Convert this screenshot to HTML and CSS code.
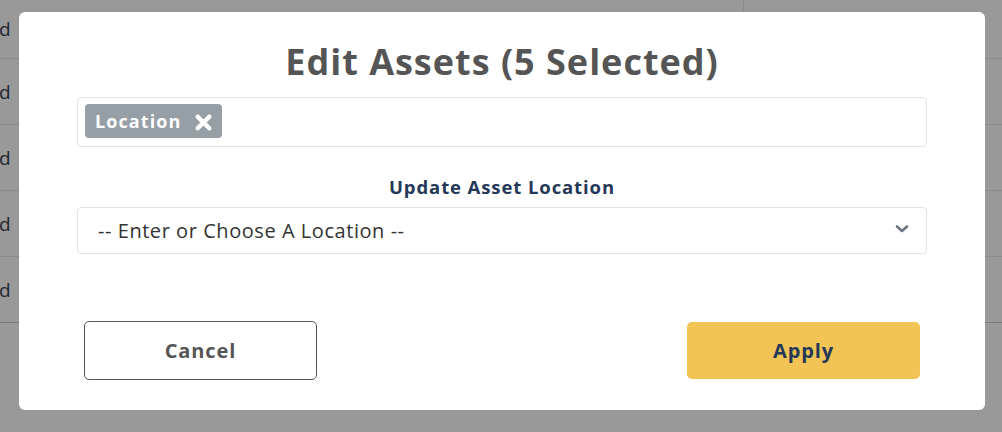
FILE: index.html
```html
<!DOCTYPE html>
<html>
<head>
<meta charset="utf-8">
<link rel="stylesheet" href="styles.css">
</head>
<body>
<div class="table">
  <div class="row first"><span class="cell">d</span><span class="col-line"></span></div>
  <div class="row"><span class="cell">d</span></div>
  <div class="row"><span class="cell">d</span></div>
  <div class="row"><span class="cell">d</span></div>
  <div class="row last"><span class="cell">d</span></div>
</div>
<div class="overlay">
  <div class="modal">
    <h1 class="title">Edit Assets (5 Selected)</h1>
    <div class="tag-box">
      <span class="tag">Location
        <svg class="tag-x" width="19" height="19" viewBox="0 0 18 18"><path d="M3.5 3.5 L14.5 14.5 M14.5 3.5 L3.5 14.5" stroke="#fff" stroke-width="4.2" stroke-linecap="round"/></svg>
      </span>
    </div>
    <div class="label">Update Asset Location</div>
    <div class="select">
      <span>-- Enter or Choose A Location --</span>
      <svg class="chev" width="14" height="10" viewBox="0 0 14 10"><path d="M2 2.5 L7 7 L12 2.5" fill="none" stroke="#6b7480" stroke-width="2.6" stroke-linecap="round" stroke-linejoin="round"/></svg>
    </div>
    <div class="actions">
      <button class="btn cancel">Cancel</button>
      <button class="btn apply">Apply</button>
    </div>
  </div>
</div>
</body>
</html>
```
FILE: styles.css
```css
* { box-sizing: border-box; }
html, body { margin: 0; padding: 0; }
body {
  width: 1002px;
  height: 432px;
  overflow: hidden;
  background: #ffffff;
  font-family: "Open Sans", "Liberation Sans", sans-serif;
  position: relative;
}
.table { display: flex; flex-direction: column; }
.row {
  height: 66px;
  border-bottom: 1px solid #e6e8eb;
  display: flex;
  align-items: center;
  position: relative;
}
.row.first { height: 59px; }
.row.last { border-bottom-color: #c8c8c8; }
.cell {
  font-size: 19px;
  color: #3a4250;
  margin-left: -1px;
}
.col-line {
  position: absolute;
  left: 743px;
  top: 0;
  bottom: 0;
  border-left: 1px solid #e6e8eb;
}
.overlay {
  position: absolute;
  inset: 0;
  background: rgba(0, 0, 0, 0.4);
  padding: 12px 17px 22px 19px;
}
.modal {
  background: #fff;
  border-radius: 6px;
  height: 398px;
  padding: 24px 58px 0 58px;
  display: flex;
  flex-direction: column;
}
.title {
  margin: 0;
  text-align: center;
  font-size: 36px;
  font-weight: 700;
  color: #555555;
  line-height: 52px;
  height: 61px;
  letter-spacing: 1px;
}
.tag-box {
  height: 50px;
  border: 1px solid #dfe3e8;
  border-radius: 4px;
  padding: 6px 7px;
  display: flex;
  align-items: flex-start;
}
.tag {
  height: 34px;
  background: #969ea6;
  border-radius: 4px;
  color: #fff;
  font-weight: 700;
  font-size: 18px;
  letter-spacing: 1.1px;
  display: inline-flex;
  align-items: center;
  padding: 0 9px 0 10px;
  gap: 12px;
}
.tag-x { margin-top: 3px; }
.label {
  margin-top: 28px;
  text-align: center;
  font-weight: 700;
  font-size: 18.5px;
  color: #253858;
  line-height: 24px;
  letter-spacing: 0.9px;
}
.select {
  margin-top: 8px;
  height: 47px;
  border: 1px solid #dfe3e8;
  border-radius: 4px;
  display: flex;
  align-items: center;
  justify-content: space-between;
  padding: 0 17px 0 20px;
  font-size: 20px;
  letter-spacing: 0.55px;
  color: #333;
}
.chev { margin-top: -3px; }
.actions {
  margin-top: 67px;
  display: flex;
  justify-content: space-between;
  padding: 0 7px;
}
.btn {
  width: 233px;
  height: 59px;
  border-radius: 5px;
  font-family: inherit;
  font-weight: 700;
  font-size: 20px;
  letter-spacing: 0.9px;
  cursor: pointer;
}
.cancel {
  background: #fff;
  border: 1px solid #555;
  color: #555;
}
.apply {
  background: #f2c455;
  border: none;
  color: #253858;
  height: 57px;
  margin-top: 1px;
}
```
